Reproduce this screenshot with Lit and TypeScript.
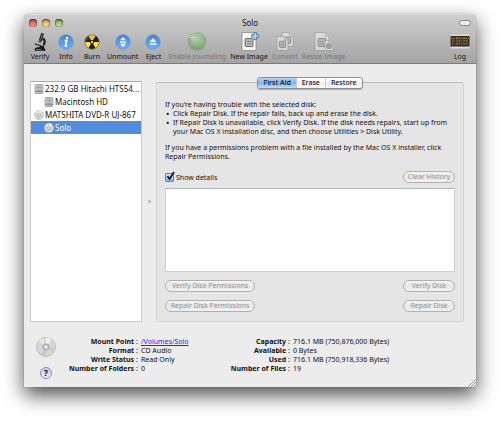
import { LitElement, html, css, svg, TemplateResult } from "lit";
import { customElement, state } from "lit/decorators.js";
import { classMap } from "lit/directives/class-map.js";

const sheet = (x: number, y: number, w: number, h: number) => svg`
  <path d="M${x} ${y}h${w - 4}l4 4v${h - 4}h${-w}z" fill="#f6f6f6" stroke="#808080" stroke-width=".7"/>
  <path d="M${x + w - 4} ${y}v4h4" fill="#d5d5d5" stroke="#909090" stroke-width=".5"/>
  <rect x=${x + w * 0.22} y=${y + h * 0.34} width=${w * 0.56} height=${h * 0.44} rx="1" fill="#b9b9b9" stroke="#4c4c4c" stroke-width=".8"/>
  <path d="M${x + w * 0.34} ${y + h * 0.5}h${w * 0.3}M${x + w * 0.34} ${y + h * 0.63}h${w * 0.3}" stroke="#777" stroke-width=".8"/>`;

const blueBall = svg`
  <defs><linearGradient id="b" x2="0" y2="1"><stop stop-color="#4482d6"/><stop offset="1" stop-color="#6cb2ff"/></linearGradient></defs>
  <circle cx="10" cy="10" r="7.2" fill="url(#b)" stroke="#4a80c4" stroke-width=".5"/>`;

const icons: Record<string, TemplateResult | unknown> = {
  verify: svg`
    <path d="M11.2.9l2.8.9-2.3 7.6-3-1z" fill="#222"/><path d="M8.8 8.2l2.6.9-.7 2-2.3-.8z" fill="#555"/>
    <path d="M13 5.200c3.400 1.600 3.600 6.200 1 8.800l-1.500-1.300c1.500-1.800 1.500-4-.3-5.300z" fill="#1b1b1b"/>
    <path d="M5 11.200l6.800 2.200-.4 1.300-6.800-2.200z" fill="#333"/>
    <path d="M4.500 17.600c.4-2 2.600-2.300 4.200-2.300l2-1.300h2.900l1.600 3.800c.6.400.4 1-.3 1H5c-.6 0-.7-.6-.5-1.200z" fill="#191919"/>
    <path d="M12.400 2.500l-1.700 5.200M6 17.500h5" stroke="#999" stroke-width=".7"/>`,
  info: svg`${blueBall}<circle cx="11.100" cy="6" r="1.200" fill="#fff"/><path d="M8.600 8.600h2.200l-1.300 5h1.500" fill="none" stroke="#fff" stroke-width="1.700"/>`,
  burn: svg`
    <circle cx="10" cy="10" r="7.200" fill="#191919"/>
    <path d="M10 10L6.300 3.800A7.200 7.200 0 0 1 13.700 3.800z" fill="#e7c24c"/>
    <path d="M10 10L2.800 10A7.200 7.200 0 0 0 6.400 16.200z" fill="#f2e04d"/>
    <path d="M10 10L17.200 10A7.200 7.200 0 0 1 13.600 16.200z" fill="#f2e04d"/>
    <path d="M2.800 10A7.200 7.200 0 0 1 6.300 3.800L8 6.800z" fill="#444"/>
    <circle cx="10" cy="10" r="2.100" fill="#222"/><circle cx="10" cy="10" r="1.200" fill="#eecb3e"/>
    <circle cx="10" cy="10" r="7.200" fill="none" stroke="#76703a" stroke-width=".6"/>`,
  unmount: svg`${blueBall}<path d="M10 5l3 3.200H7zM10 15l3-3.200H7zM7 9.400h6v1.300H7z" fill="#fff"/>`,
  eject: svg`${blueBall}<path d="M10 6l3.400 3.900H6.600zM6.600 11.200h6.800v1.500H6.600z" fill="#fff"/>`,
  journal: svg`
    <defs><radialGradient id="g" cy=".35"><stop stop-color="#b4d69c"/><stop offset="1" stop-color="#5fa552"/></radialGradient></defs>
    <circle cx="10" cy="9.500" r="9.500" fill="url(#g)"/><path d="M4.500 15h11M6 16.700h8" stroke="#4d8a40" stroke-width=".8" stroke-dasharray="2 .5"/>
    <path d="M6 1v9M1.500 5.500h9M3.500 3l5 5M8.500 3l-5 5" stroke="#b4e4f4" stroke-width=".9"/>`,
  newimage: svg`${sheet(3, 0.5, 14, 18)}<path d="M16.200 0v8M12.200 4h8" stroke="#426c94" stroke-width="3"/><path d="M16.200 .8v6.400M13 4h6.400" stroke="#b9dcf4" stroke-width="1.500"/>`,
  convert: svg`${sheet(7, 0.5, 11, 14)}${sheet(2, 4.5, 11, 14)}`,
  resize: svg`${sheet(1, 0.5, 14, 18)}${sheet(11, 8.5, 8, 10)}`,
  log: svg`
    <rect x=".5" y="2.500" width="19" height="14" fill="#dedede"/><rect x=".5" y="4" width="19" height="10.500" fill="#2b2825"/>
    <path d="M1.500 6.200h17M2 9h16.500M1.500 12h17" stroke="#c18b3e" stroke-width="1.200" stroke-dasharray="1.800 .6 .8 1 2.400 .5"/>
    <path d="M1.500 7.600h17M2 10.700h16" stroke="#7e6d58" stroke-width=".8" stroke-dasharray="1 1.200"/>`,
  drive: svg`
    <rect x="2" y="1" width="16" height="18" rx="2" fill="#d0d0d0" stroke="#808080" stroke-width="1.200"/>
    <path d="M5 4h10.500M5 7h10.500M5 10h10.500M5 13h10.500" stroke="#8a8a8a" stroke-width="1.300"/>
    <path d="M3 15.500h14" stroke="#555" stroke-width="1.500"/><circle cx="6" cy="17" r=".8" fill="#eee"/>`,
  disc: svg`
    <circle cx="10" cy="10" r="9.500" fill="#d7d7d7" stroke="#a2a2a2" stroke-width=".6"/>
    <path d="M10 10L2.500 4.500A9.300 9.300 0 0 1 7 1.200z" fill="#eee9cf"/>
    <path d="M10 10L1 8A9.300 9.300 0 0 1 2.500 4.500z" fill="#c4d9e4"/>
    <path d="M10 10L17.500 15.500A9.300 9.300 0 0 1 14.500 18z" fill="#e3d9a8"/>
    <path d="M10 10L19 12A9.300 9.300 0 0 1 17.500 15.500z" fill="#b7d3da"/>
    <path d="M10 10L10 .6A9.300 9.300 0 0 1 15.500 2.400z" fill="#f1f1f1"/>
    <path d="M10 10L10 19.400A9.300 9.300 0 0 1 4.500 17.600z" fill="#c6c6c6"/>
    <circle cx="10" cy="10" r="3.300" fill="#bbb" stroke="#999" stroke-width=".5"/><circle cx="10" cy="10" r="1.500" fill="#fafafa"/>`,
};

const icon = (name: string, cls: string) =>
  html`<svg class=${cls} viewBox="0 0 20 20" aria-hidden="true">${icons[name]}</svg>`;

const tools = [
  { icon: "verify", label: "Verify" },
  { icon: "info", label: "Info" },
  { icon: "burn", label: "Burn" },
  { icon: "unmount", label: "Unmount" },
  { icon: "eject", label: "Eject" },
  { icon: "journal", label: "Enable Journaling", disabled: true },
  { icon: "newimage", label: "New Image" },
  { icon: "convert", label: "Convert", disabled: true },
  { icon: "resize", label: "Resize Image", disabled: true },
  { icon: "log", label: "Log", end: true },
];

const volumes = [
  { icon: "drive", label: "232.9 GB Hitachi HTS54..." },
  { icon: "drive", label: "Macintosh HD", child: true },
  { icon: "disc", label: "MATSHITA DVD-R UJ-867" },
  { icon: "disc", label: "Solo", child: true },
];

const facts = [
  [
    ["Mount Point", "/Volumes/Solo"],
    ["Format", "CD Audio"],
    ["Write Status", "Read Only"],
    ["Number of Folders", "0"],
  ],
  [
    ["Capacity", "716.1 MB (750,876,000 Bytes)"],
    ["Available", "0 Bytes"],
    ["Used", "716.1 MB (750,918,336 Bytes)"],
    ["Number of Files", "19"],
  ],
];

@customElement("app-root")
export class AppRoot extends LitElement {
  @state() private tab = "First Aid";
  @state() private volume = "Solo";

  static styles = css`
    :host {
      display: block;
      padding: 14px 24px 34px;
      background: #fff;
      color: #111;
      font: 7px/9px "Noto Sans", "Open Sans", sans-serif;
    }
    * { box-sizing: border-box; }
    button, textarea, input { font: inherit; color: inherit; margin: 0; padding: 0; }
    button { border: 0; background: none; white-space: nowrap; }
    p, ul, dl, dd, h1 { margin: 0; padding: 0; font: inherit; }
    .window {
      position: relative;
      background: #ececec;
      border-radius: 4px 4px 0 0;
      box-shadow: 0 0 1px rgba(0, 0, 0, 0.5), 0 8px 20px rgba(0, 0, 0, 0.7);
    }
    .chrome {
      border-radius: 4px 4px 0 0;
      border-top: 1px solid #dedede;
      border-bottom: 1px solid #7b7b7b;
      background: linear-gradient(#cecece, #a4a4a4);
    }
    .titlebar { display: grid; grid-template-columns: 1fr auto 1fr; align-items: center; height: 15px; padding: 0 5px; }
    .title { font-size: 8px; }
    .lights { display: flex; gap: 5px; }
    .light { width: 8px; height: 8px; border-radius: 50%; box-shadow: inset 0 1px 2px rgba(0, 0, 0, 0.5), inset 0 0 1px #000; }
    .close { background: linear-gradient(#c64a45, #ff9c90); }
    .minimize { background: linear-gradient(#dd9a3f, #ffec9a); }
    .grow { background: linear-gradient(#7ba145, #c9f29a); }
    .pill { justify-self: end; width: 12px; height: 6px; border: 1px solid #888; border-radius: 3px; background: #ededed; }
    .toolbar { display: flex; padding: 2px 3px 0; height: 33px; }
    .tool { display: flex; flex-direction: column; align-items: center; min-width: 26px; padding: 0 2px; }
    .tool:disabled { color: #777; }
    .tool:disabled svg { opacity: 0.55; }
    .tool.end { margin-left: auto; }
    .tool-icon { width: 20px; height: 20px; overflow: visible; }
    .main { display: grid; grid-template-columns: 112px 14px 1fr; padding: 17px 12px 0 6px; }
    .volumes { border: 1px solid #c9c9c9; border-top-color: #aaa; background: #fff; list-style: none; font-size: 8px; }
    .volume { display: flex; align-items: center; gap: 1px; height: 13px; padding-left: 3px; white-space: nowrap; }
    .volume.child { padding-left: 13px; }
    .volume.selected { background: #548cdc; color: #fff; }
    .volume-icon { width: 10px; height: 10px; flex: none; }
    .splitter { place-self: center; width: 3px; height: 3px; border-radius: 50%; background: #b4b4b4; }
    .panel { margin-top: 1px; padding: 0 8px 9px; border: 1px solid #d4d4d4; border-top-color: #b8b8b8; border-radius: 2px; background: #e5e5e5; }
    .tabs { display: flex; width: max-content; margin: -6px auto 0; border: 1px solid #8f8f8f; border-radius: 3px; background: linear-gradient(#fff, #f0f0f0 50%, #fafafa); box-shadow: 0 1px 1px rgba(0, 0, 0, 0.25); }
    .tab { height: 10px; padding: 0 5px; line-height: 10px; font-weight: 500; }
    .tab + .tab { border-left: 1px solid #ccc; }
    .tab.active { background: linear-gradient(#b9d3f5, #82b2ee 50%, #b8e0ff); border-radius: 2px 0 0 2px; }
    .help-text { padding-top: 11px; }
    .bullets { padding-left: 8px; list-style: none; }
    .bullets li::before { content: "•"; float: left; margin-left: -7px; font-size: 9px; }
    .bullets + p { margin-top: 7px; }
    .row { display: flex; justify-content: space-between; align-items: center; }
    .details { margin-top: 10px; }
    .check { display: flex; align-items: center; gap: 2px; }
    .check input {
      appearance: none; width: 9px; height: 9px; border: 1px solid #6d7f9c; border-radius: 1px;
      background: linear-gradient(#d9e8fa, #7fb2ee);
    }
    .box { position: relative; display: flex; }
    .tick { position: absolute; left: 1px; bottom: 1px; width: 9px; height: 10px; display: none; pointer-events: none; }
    .box input:checked + .tick { display: block; }
    .push {
      height: 12px; min-width: 52px; padding: 0 3px; border: 1px solid #b0b0b0; border-radius: 6px;
      background: linear-gradient(#f4f4f4, #e6e6e6 50%, #f2f2f2); color: #939393; line-height: 10px;
    }
    .push.wide { min-width: 90px; }
    .log { display: block; width: 100%; height: 84px; margin-top: 5px; border: 1px solid #d0d0d0; border-top-color: #b0b0b0; background: #fff; resize: none; }
    .actions { margin-top: 8px; }
    .footer { display: grid; grid-template-columns: 20px 175px 1fr; padding: 15px 12px 8px; }
    .badges { display: flex; flex-direction: column; align-items: center; gap: 10px; }
    .disc { width: 20px; height: 20px; }
    .help { width: 12px; height: 12px; border-radius: 50%; border: 1px solid #8c8aa8; background: linear-gradient(#cfc9ee, #efeaff); font-weight: 700; font-size: 9px; line-height: 10px; }
    .column { display: grid; align-content: start; justify-content: start; white-space: nowrap; }
    .column.first { grid-template-columns: 82px auto; }
    .column.second { grid-template-columns: 59px auto; }
    .names { display: flex; justify-content: flex-end; gap: 2px; font-weight: 700; }
    .names span { font-weight: 400; }
    .values { padding-left: 3px; }
    .footer a { color: #2a2ae6; }
    .grip { position: absolute; right: 0; bottom: 0; width: 8px; height: 8px; }
  `;

  render() {
    return html`
      <div class="window">
        <header class="chrome">
          <div class="titlebar">
            <div class="lights">
              <button class="light close" aria-label="Close"></button>
              <button class="light minimize" aria-label="Minimize"></button>
              <button class="light grow" aria-label="Zoom"></button>
            </div>
            <h1 class="title">Solo</h1>
            <button class="pill" aria-label="Toggle toolbar"></button>
          </div>
          <nav class="toolbar">
            ${tools.map((t) => html`
              <button class=${classMap({ tool: true, end: !!t.end })} ?disabled=${t.disabled}>
                ${icon(t.icon, "tool-icon")}<span>${t.label}</span>
              </button>`)}
          </nav>
        </header>
        <main class="main">
          <ul class="volumes" role="listbox" aria-label="Volumes">
            ${volumes.map((v) => html`
              <li role="option" aria-selected=${v.label === this.volume}
                class=${classMap({ volume: true, child: !!v.child, selected: v.label === this.volume })}
                @click=${() => (this.volume = v.label)}>
                ${icon(v.icon, "volume-icon")}<span>${v.label}</span>
              </li>`)}
          </ul>
          <div class="splitter"></div>
          <section class="panel">
            <div class="tabs" role="tablist">
              ${["First Aid", "Erase", "Restore"].map((t) => html`
                <button role="tab" aria-selected=${t === this.tab}
                  class=${classMap({ tab: true, active: t === this.tab })}
                  @click=${() => (this.tab = t)}>${t}</button>`)}
            </div>
            <div class="help-text">
              <p>If you're having trouble with the selected disk:</p>
              <ul class="bullets">
                <li>Click Repair Disk. If the repair fails, back up and erase the disk.</li>
                <li>If Repair Disk is unavailable, click Verify Disk. If the disk needs repairs, start up from<br />your Mac OS X installation disc, and then choose Utilities &gt; Disk Utility.</li>
              </ul>
              <p>If you have a permissions problem with a file installed by the Mac OS X installer, click<br />Repair Permissions.</p>
            </div>
            <div class="row details">
              <label class="check">
                <span class="box">
                  <input type="checkbox" checked />
                  <svg class="tick" viewBox="0 0 9 10" aria-hidden="true"><path d="M1.500 5l2 3L8 1" fill="none" stroke="#111" stroke-width="1.600" /></svg>
                </span>
                Show details
              </label>
              <button class="push" disabled>Clear History</button>
            </div>
            <textarea class="log" readonly aria-label="Details"></textarea>
            <div class="row actions">
              <button class="push wide" disabled>Verify Disk Permissions</button>
              <button class="push" disabled>Verify Disk</button>
            </div>
            <div class="row actions">
              <button class="push wide" disabled>Repair Disk Permissions</button>
              <button class="push" disabled>Repair Disk</button>
            </div>
          </section>
        </main>
        <footer class="footer">
          <div class="badges">
            ${icon("disc", "disc")}
            <button class="help" aria-label="Help">?</button>
          </div>
          ${facts.map((column, i) => html`
            <dl class=${classMap({ column: true, first: i === 0, second: i === 1 })}>
              ${column.map(([name, value]) => html`
                <dt class="names">${name}<span>:</span></dt>
                <dd class="values">${value.startsWith("/") ? html`<a href="#solo">${value}</a>` : value}</dd>`)}
            </dl>`)}
        </footer>
        <svg class="grip" viewBox="0 0 8 8" aria-hidden="true"><path d="M0 8L8 0M3 8l5-5M6 8l2-2" stroke="#8c8c8c" stroke-width=".9" /></svg>
      </div>
    `;
  }
}
